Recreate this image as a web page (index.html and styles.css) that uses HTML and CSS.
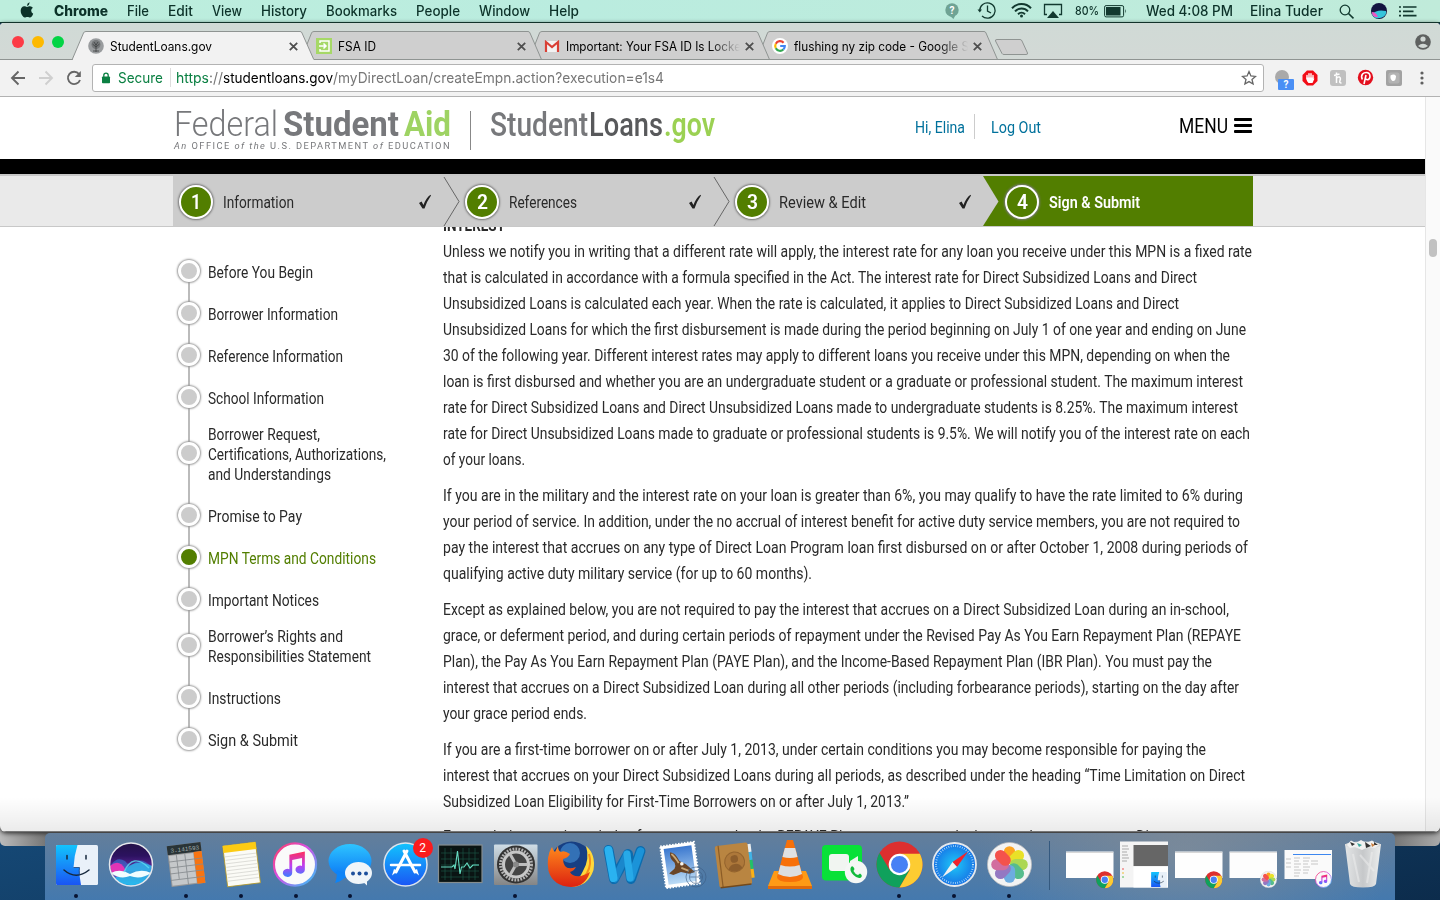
FILE: index.html
```html
<!DOCTYPE html>
<html lang="en">
<head>
<meta charset="utf-8">
<title>StudentLoans.gov</title>
<link rel="stylesheet" href="styles.css">
</head>
<body>
<svg width="0" height="0" class="defs">
  <defs>
    <linearGradient id="gSilver" x2="0" y2="1"><stop stop-color="#cfdde6"/><stop offset="1" stop-color="#858585"/></linearGradient>
    <linearGradient id="gBlue" x2="0" y2="1"><stop stop-color="#12c4fd"/><stop offset="1" stop-color="#1a55f4"/></linearGradient>
    <linearGradient id="gMsg" x2="0" y2="1"><stop stop-color="#2ec4ff"/><stop offset="1" stop-color="#0a76f5"/></linearGradient>
    <linearGradient id="gSky" x2="0" y2="1"><stop stop-color="#3b78cf"/><stop offset="1" stop-color="#bcdcf6"/></linearGradient>
    <linearGradient id="gMusic" x2="0" y2="1"><stop stop-color="#ff2f5a"/><stop offset=".55" stop-color="#c03df0"/><stop offset="1" stop-color="#3c7dff"/></linearGradient>
    <linearGradient id="gRing" x2="1" y2="1"><stop stop-color="#ff3b5c"/><stop offset=".45" stop-color="#d451e8"/><stop offset="1" stop-color="#28c9f7"/></linearGradient>
    <linearGradient id="gSiri" x2="0" y2="1"><stop stop-color="#241247"/><stop offset=".3" stop-color="#2c1260"/><stop offset=".55" stop-color="#5a2594"/><stop offset="1" stop-color="#1fa4e6"/></linearGradient>
    <linearGradient id="gTrash" x2="1" y2="0"><stop stop-color="#e3e5e6"/><stop offset=".5" stop-color="#c6c8ca"/><stop offset="1" stop-color="#eceeee"/></linearGradient>
    <linearGradient id="gFox" x2="0" y2="1"><stop stop-color="#ff8a1c"/><stop offset="1" stop-color="#dc2110"/></linearGradient>
    <radialGradient id="gSafari"><stop stop-color="#1fc8f7"/><stop offset="1" stop-color="#1672e6"/></radialGradient>
    <symbol id="chrome" viewBox="0 0 48 48">
      <circle cx="24" cy="24" r="23.5" fill="#dd2f2f"/>
      <path d="M3.6 12.3A23.5 23.5 0 0 0 24 47.5L34 30 24 24 14 29.5Z" fill="#0fa15c"/>
      <path d="M44.8 13H24L34.5 29.5 24 47.5A23.5 23.5 0 0 0 44.8 13Z" fill="#fdcc32"/>
      <circle cx="24" cy="24" r="11" fill="#fff"/><circle cx="24" cy="24" r="8.7" fill="#4880f5"/>
    </symbol>
    <symbol id="photos" viewBox="0 0 48 48">
      <circle cx="24" cy="24" r="23.5" fill="#f3f3f3" stroke="#bbb" stroke-width=".8"/>
      <g opacity=".9">
        <rect x="18" y="4.5" width="12" height="19" rx="6" fill="#ff9c0a"/>
        <rect x="18" y="4.5" width="12" height="19" rx="6" fill="#e9e013" transform="rotate(45 24 24)"/>
        <rect x="18" y="4.5" width="12" height="19" rx="6" fill="#a5d543" transform="rotate(90 24 24)"/>
        <rect x="18" y="4.5" width="12" height="19" rx="6" fill="#46b783" transform="rotate(135 24 24)"/>
        <rect x="18" y="4.5" width="12" height="19" rx="6" fill="#5fa5df" transform="rotate(180 24 24)"/>
        <rect x="18" y="4.5" width="12" height="19" rx="6" fill="#8a6bbd" transform="rotate(225 24 24)"/>
        <rect x="18" y="4.5" width="12" height="19" rx="6" fill="#cf5f96" transform="rotate(270 24 24)"/>
        <rect x="18" y="4.5" width="12" height="19" rx="6" fill="#f5413b" transform="rotate(315 24 24)"/>
      </g>
    </symbol>
    <symbol id="itunes" viewBox="0 0 48 48">
      <circle cx="24" cy="24" r="22.5" fill="#fafafa" stroke="url(#gRing)" stroke-width="2.4"/>
      <path d="M18 13.5 34.5 10V29.5a5 4.3 0 1 1-3-4V17L21 19.2V33a5 4.3 0 1 1-3-4Z" fill="url(#gMusic)"/>
    </symbol>
    <symbol id="finder" viewBox="0 0 42 40">
      <rect width="42" height="40" rx="1.5" fill="#e9f1f9"/>
      <path d="M1.5 0H21.500Q18 11 17.500 22.500H23.500Q23 31 25 40H1.500Q0 40 0 38.500V1.500Q0 0 1.500 0Z" fill="url(#gBlue)"/>
      <path d="M11 10.500V14M30 10.500V14M8 25Q20 35.500 33 25" fill="none" stroke="#16283c" stroke-width="1.500" stroke-linecap="round"/>
      <path d="M17.500 22.500H23.500Q23 25 23.400 30" fill="none" stroke="#183f78" stroke-width=".8"/>
    </symbol>
  </defs>
</svg>

<div class="menubar">
  <svg class="apple" width="14" height="16" viewBox="0 0 14 16"><path d="M9.600.3Q9.700 3 7 4 6.800 1.300 9.600.3ZM7 4.900C8 4.700 8.800 4.200 10 4.200q1.900 0 2.900 1.500-1.800 1.100-1.700 3.100t2 3q-.8 2.200-2 3.300c-1.300.9-2.200-.2-3.800-.2s-2.600 1.200-3.900.1C1.500 13.200.6 10.800.7 8.500.8 6 2.300 4.300 4.300 4.300 5.400 4.300 6 4.900 7 4.900Z" fill="#0c3229"/></svg>
  <div class="menus">
    <b data-w="54">Chrome</b><span data-w="22">File</span><span data-w="25">Edit</span><span data-w="30">View</span><span data-w="46">History</span><span data-w="71">Bookmarks</span><span data-w="44">People</span><span data-w="51">Window</span><span data-w="30">Help</span>
  </div>
  <svg class="status" width="125" height="22" viewBox="945 0 125 22" fill="none" stroke="#12392f" stroke-width="1.300">
    <circle cx="952" cy="10" r="6.700" fill="#6fa394" stroke="none"/><path d="M950 16H955L953.500 19Z" fill="#6fa394" stroke="none"/>
    <text x="952" y="13.500" text-anchor="middle" class="q" stroke="none">?</text>
    <path d="M979.700 10.500A7.700 7.700 0 1 1 982 16"/><path d="M977.500 9.500H982L979.800 12.500Z" fill="#12392f" stroke="none"/><path d="M987.500 5.500V11L991 13"/>
    <g stroke-width="2"><path d="M1012 8.200A13 13 0 0 1 1031 8.200M1015 11.400A9 9 0 0 1 1028 11.400M1018 14.200A5 5 0 0 1 1025 14.200"/></g><circle cx="1021.500" cy="16" r="1.500" fill="#12392f" stroke="none"/>
    <path d="M1047 14.500H1044.500V4.500H1061.500V14.500H1059"/><path d="M1053 11 1059 18H1047Z" fill="#12392f" stroke="none"/>
  </svg>
  <span class="pct" data-w="24">80%</span>
  <svg class="battery" width="24" height="13" viewBox="0 0 24 13"><rect x=".6" y=".6" width="19" height="11.300" rx="1.500" fill="none" stroke="#12392f"/><rect x="2" y="2" width="14.500" height="8.500" fill="#12392f"/><path d="M21.300 4V8.500Q23 6.200 21.300 4Z" fill="#12392f"/></svg>
  <span class="clock" data-w="87">Wed 4:08 PM</span>
  <span class="user" data-w="73">Elina Tuder</span>
  <svg class="right-icons" width="90" height="22" viewBox="1335 0 90 22">
    <g fill="none" stroke="#12392f"><circle cx="1345" cy="10" r="4.800" stroke-width="1.300"/><path d="M1348.500 13.500 1353.500 18.300" stroke-width="1.600"/></g>
    <circle cx="1379" cy="11" r="8" fill="#131440"/><path d="M1372 14Q1377 9 1386 11 1387 15 1382 17.500 1374 20 1372 14Z" fill="#36c5db"/><path d="M1372 12Q1376 12 1378 17H1375Q1372 16 1372 12Z" fill="#ee55c3"/>
    <path d="M1403 7H1416.500M1403 11.300H1413.500M1403 15.600H1416.500" stroke="#12392f" stroke-width="1.700"/><path d="M1399 7H1401M1399 11.300H1401M1399 15.600H1401" stroke="#12392f" stroke-width="1.700"/>
  </svg>
</div>

<div class="desktop">
  <div class="rear-window"></div>
  <div class="window">
    <div class="tabstrip">
      <svg class="tabshapes" width="1440" height="37" viewBox="0 23 1440 37" stroke="#8f9492">
        <g fill="#cfcfcf">
          <path d="M757 59.500 767.500 33Q768 31.500 770 31.500H984Q985.500 31.500 986 33L997.500 59.500Z"/>
          <path d="M529 59.500 539.500 33Q540 31.500 542 31.500H756Q757.500 31.500 758 33L769.500 59.500Z"/>
          <path d="M301 59.500 311.500 33Q312 31.500 314 31.500H528Q529.500 31.500 530 33L541.500 59.500Z"/>
          <path d="M997 39.500H1020Q1021.500 39.500 1022 41L1027.500 53Q1028 54.500 1026 54.500H1004Q1002.500 54.500 1002 53.500L995.500 41Q995 39.500 997 39.500Z"/>
        </g>
        <path d="M0 59.500H1440"/>
        <path d="M72 60 83.500 33Q84 31.500 86 31.500H300Q301.500 31.500 302 33L314 60Z" fill="#f2f2f2"/>
        <path d="M73 60.500H313.500V59H73Z" fill="#f2f2f2" stroke="none"/>
        <g stroke="none"><circle cx="18" cy="42" r="6" fill="#fc3b46"/><circle cx="38" cy="42" r="6" fill="#fdb900"/><circle cx="58" cy="42" r="6" fill="#03d445"/></g>
        <g stroke="none"><circle cx="1423" cy="42" r="7.800" fill="#5e6160"/><circle cx="1423" cy="39" r="2.600" fill="#d1d8d5"/><path d="M1418 46Q1423 41.500 1428 46 1423 50 1418 46Z" fill="#d1d8d5"/></g>
      </svg>
      <div class="tabs">
        <div class="tab">
          <svg width="16" height="16"><circle cx="8" cy="8" r="7.800" fill="#999c9e"/><circle cx="8" cy="6.500" r="4.500" fill="#75787a"/><path d="M8 14V6M8 9 4.500 6M8 9 11.500 6M8 7 6 4M8 7 10 4M5 13H11" stroke="#3c3f40" stroke-width=".8"/></svg>
          <span class="ttl"><span data-w="102">StudentLoans.gov</span></span>
          <svg class="x" width="9" height="9"><path d="M.8.8 8.200 8.200M8.200.8.8 8.200"/></svg>
        </div>
        <div class="tab">
          <svg width="16" height="16"><rect width="16" height="16" fill="#a6d867"/><path d="M4 5V3H13V13H4V11M3 8H9.500M7.500 5.500 10 8 7.500 10.500" fill="none" stroke="#fff" stroke-width="1.500"/></svg>
          <span class="ttl"><span data-w="38">FSA ID</span></span>
          <svg class="x" width="9" height="9"><path d="M.8.8 8.200 8.200M8.200.8.8 8.200"/></svg>
        </div>
        <div class="tab">
          <svg width="16" height="16"><path d="M2 3H14V14H2Z" fill="#f2f2f2"/><path d="M2 14V4L8 9 14 4V14" fill="none" stroke="#d93f35" stroke-width="2.200"/></svg>
          <span class="ttl fade"><span data-w="175">Important: Your FSA ID Is Locke</span></span>
          <svg class="x" width="9" height="9"><path d="M.8.8 8.200 8.200M8.200.8.8 8.200"/></svg>
        </div>
        <div class="tab">
          <svg width="16" height="16" fill="none" stroke-width="2.200"><circle cx="8" cy="8" r="8" fill="#fff"/><path d="M11.600 4.700A4.800 4.800 0 0 0 3.800 5.700" stroke="#ea4335"/><path d="M3.800 5.700A4.800 4.800 0 0 0 3.800 10.300" stroke="#fbbc05"/><path d="M3.800 10.300A4.800 4.800 0 0 0 11.300 11.500" stroke="#34a853"/><path d="M11.300 11.500A4.800 4.800 0 0 0 12.800 8H8.200" stroke="#4285f4"/></svg>
          <span class="ttl fade"><span data-w="175">flushing ny zip code - Google S</span></span>
          <svg class="x" width="9" height="9"><path d="M.8.8 8.200 8.200M8.200.8.8 8.200"/></svg>
        </div>
      </div>
    </div>

    <div class="toolbar">
      <svg class="nav" width="92" height="36" viewBox="0 60 92 36" fill="none" stroke="#666" stroke-width="1.900">
        <path d="M25 78H12.500M18.500 71.500 12 78 18.500 84.500"/><path d="M39 78H51.500M45.500 71.500 52 78 45.500 84.500" stroke="#cfcfcf"/>
        <path d="M79 74A6.200 6.200 0 1 0 80 80"/><path d="M80.800 71V77H74.800Z" fill="#666" stroke="none"/>
      </svg>
      <div class="omnibox">
        <svg class="lock" width="10" height="12"><rect x="1" y="4.500" width="8" height="6.800" rx=".8" fill="#0b8043"/><path d="M2.800 5V3.300A2.200 2.200 0 0 1 7.200 3.300V5" fill="none" stroke="#0b8043" stroke-width="1.300"/></svg>
        <span class="secure" data-w="45">Secure</span>
        <i class="vr"></i>
        <span class="url"><span class="g" data-w="33">https</span><span data-w="14">://</span><span class="k" data-w="110">studentloans.gov</span><span data-w="331">/myDirectLoan/createEmpn.action?execution=e1s4</span></span>
        <svg class="star" width="16" height="16" viewBox="0 0 16 16"><path d="M8 1.600 9.900 6 14.500 6.400 11 9.500 12.100 14 8 11.600 3.900 14 5 9.500 1.500 6.400 6.100 6Z" fill="none" stroke="#666" stroke-width="1.300"/></svg>
      </div>
      <svg class="exts" width="172" height="36" viewBox="1268 60 172 36">
        <circle cx="1282" cy="77" r="7" fill="#a9a9a9"/><rect x="1278" y="79" width="16" height="11" rx="1" fill="#4a8ff5"/><text x="1286" y="88" text-anchor="middle" class="q">?</text>
        <path d="M1307 70.500H1313L1317.500 75V81L1313 85.500H1307L1302.500 81V75Z" fill="#f20d17"/><path d="M1307 79V75.500M1309 78V73.800M1311 78V73.800M1313 78V75.500" stroke="#fff" stroke-width="1.400" stroke-linecap="round"/><path d="M1306.300 77.500H1313.700V79L1314.500 78.500 1312.500 83H1308.500Q1306.500 81.500 1306.300 77.500Z" fill="#fff"/>
        <rect x="1330" y="70" width="16" height="16" rx="3" fill="#c0c0c0"/><path d="M1336.500 72.500V83M1336.500 79Q1337 76.500 1339.500 77 1341 78 1340 80.500T1341.500 83M1334 75.500 1339.500 74" fill="none" stroke="#fff" stroke-width="1.500"/>
        <circle cx="1365.500" cy="77.500" r="7.700" fill="#e3101e"/><path d="M1362.300 79.500C1360 74 1364 72.500 1366.300 72.500 1371 72.500 1371 79.500 1367.500 79.700 1366.500 79.700 1365.800 79.200 1365.500 78.500M1366 75 1364 84" fill="none" stroke="#fff" stroke-width="1.600"/>
        <rect x="1386" y="70" width="16" height="16" rx="2" fill="#a2a2a2"/><rect x="1388.500" y="72.500" width="11" height="11" rx="2" fill="#b3b3b3"/><path d="M1390.500 75.500Q1394 73.500 1396 76 1396 81.500 1392.500 81 1390 79 1390.500 75.500Z" fill="#fff"/>
        <g fill="#5f5f5f"><circle cx="1422" cy="73" r="1.600"/><circle cx="1422" cy="78" r="1.600"/><circle cx="1422" cy="83" r="1.600"/></g>
      </svg>
    </div>

    <div class="viewport">
      <div class="page">
        <header class="site-head">
          <div class="brand">
            <div class="fsa"><span class="thin" data-w="104">Federal</span><span class="bold stu" data-w="116">Student</span><span class="bold lime aid" data-w="47">Aid</span></div>
            <div class="office" data-w="277"><i>An</i> OFFICE <i>of the</i> U.S. DEPARTMENT <i>of</i> EDUCATION</div>
          </div>
          <div class="brand2"><span data-w="98">Student</span><span class="dark" data-w="74">Loans</span><span class="lime2" data-w="51">.gov</span></div>
          <a class="hi"><span data-w="50">Hi, Elina</span></a>
          <a class="logout"><span data-w="50">Log Out</span></a>
          <span class="menu"><span data-w="49">MENU</span></span>
          <div class="burger"><i></i><i></i><i></i></div>
        </header>
        <div class="black"></div>
        <nav class="stepbar">
          <div class="steps">
            <div class="step first"><b class="num"><span data-w="10">1</span></b><span class="lbl"><span data-w="71">Information</span></span><svg class="chk" width="14" height="16"><path d="M1 9 3.500 7.500 5.500 11Q8 4 12.500.8L13 1.500Q9 7 6.500 14.500H4.500Z" fill="#222"/></svg></div>
            <div class="step"><svg class="chev" width="17" height="50"><path d="M1 1 16 25.500 1 50" fill="none" stroke="#666"/></svg><b class="num"><span data-w="11">2</span></b><span class="lbl"><span data-w="68">References</span></span><svg class="chk" width="14" height="16"><path d="M1 9 3.500 7.500 5.500 11Q8 4 12.500.8L13 1.500Q9 7 6.500 14.500H4.500Z" fill="#222"/></svg></div>
            <div class="step"><svg class="chev" width="17" height="50"><path d="M1 1 16 25.500 1 50" fill="none" stroke="#666"/></svg><b class="num"><span data-w="11">3</span></b><span class="lbl"><span data-w="87">Review &amp; Edit</span></span><svg class="chk" width="14" height="16"><path d="M1 9 3.500 7.500 5.500 11Q8 4 12.500.8L13 1.500Q9 7 6.500 14.500H4.500Z" fill="#222"/></svg></div>
            <div class="step now"><svg class="chev" width="17" height="50"><path d="M0 0 15.500 25.500 0 50Z" fill="#ccc"/></svg><b class="num"><span data-w="11">4</span></b><span class="lbl"><span data-w="91">Sign &amp; Submit</span></span></div>
          </div>
        </nav>
        <div class="columns">
          <ul class="side">
            <li><i></i><div><p data-w="105">Before You Begin</p></div></li>
            <li><i></i><div><p data-w="130">Borrower Information</p></div></li>
            <li><i></i><div><p data-w="135">Reference Information</p></div></li>
            <li><i></i><div><p data-w="116">School Information</p></div></li>
            <li class="multi"><i></i><div><p data-w="112">Borrower Request,</p><p data-w="178">Certifications, Authorizations,</p><p data-w="123">and Understandings</p></div></li>
            <li><i></i><div><p data-w="94">Promise to Pay</p></div></li>
            <li class="on"><i></i><div><p data-w="168">MPN Terms and Conditions</p></div></li>
            <li><i></i><div><p data-w="111">Important Notices</p></div></li>
            <li class="multi"><i></i><div><p data-w="135">Borrower’s Rights and</p><p data-w="163">Responsibilities Statement</p></div></li>
            <li><i></i><div><p data-w="73">Instructions</p></div></li>
            <li><i></i><div><p data-w="90">Sign &amp; Submit</p></div></li>
          </ul>
          <main class="terms">
            <h3 data-w="62">INTEREST</h3>
            <section>
              <p data-w="809">Unless we notify you in writing that a different rate will apply, the interest rate for any loan you receive under this MPN is a fixed rate</p>
              <p data-w="754">that is calculated in accordance with a formula specified in the Act. The interest rate for Direct Subsidized Loans and Direct</p>
              <p data-w="736">Unsubsidized Loans is calculated each year. When the rate is calculated, it applies to Direct Subsidized Loans and Direct</p>
              <p data-w="803">Unsubsidized Loans for which the first disbursement is made during the period beginning on July 1 of one year and ending on June</p>
              <p data-w="787">30 of the following year. Different interest rates may apply to different loans you receive under this MPN, depending on when the</p>
              <p data-w="800">loan is first disbursed and whether you are an undergraduate student or a graduate or professional student. The maximum interest</p>
              <p data-w="795">rate for Direct Subsidized Loans and Direct Unsubsidized Loans made to undergraduate students is 8.25%. The maximum interest</p>
              <p data-w="807">rate for Direct Unsubsidized Loans made to graduate or professional students is 9.5%. We will notify you of the interest rate on each</p>
              <p data-w="82">of your loans.</p>
            </section>
            <section>
              <p data-w="800">If you are in the military and the interest rate on your loan is greater than 6%, you may qualify to have the rate limited to 6% during</p>
              <p data-w="797">your period of service. In addition, under the no accrual of interest benefit for active duty service members, you are not required to</p>
              <p data-w="805">pay the interest that accrues on any type of Direct Loan Program loan first disbursed on or after October 1, 2008 during periods of</p>
              <p data-w="369">qualifying active duty military service (for up to 60 months).</p>
            </section>
            <section>
              <p data-w="786">Except as explained below, you are not required to pay the interest that accrues on a Direct Subsidized Loan during an in-school,</p>
              <p data-w="798">grace, or deferment period, and during certain periods of repayment under the Revised Pay As You Earn Repayment Plan (REPAYE</p>
              <p data-w="769">Plan), the Pay As You Earn Repayment Plan (PAYE Plan), and the Income-Based Repayment Plan (IBR Plan). You must pay the</p>
              <p data-w="796">interest that accrues on a Direct Subsidized Loan during all other periods (including forbearance periods), starting on the day after</p>
              <p data-w="144">your grace period ends.</p>
            </section>
            <section>
              <p data-w="763">If you are a first-time borrower on or after July 1, 2013, under certain conditions you may become responsible for paying the</p>
              <p data-w="802">interest that accrues on your Direct Subsidized Loans during all periods, as described under the heading “Time Limitation on Direct</p>
              <p data-w="466">Subsidized Loan Eligibility for First-Time Borrowers on or after July 1, 2013.”</p>
            </section>
            <section class="last">
              <p data-w="730">Except during certain periods of repayment under the REPAYE Plan, you must pay the interest that accrues on a Direct</p>
            </section>
          </main>
        </div>
      </div>
      <div class="scroll"><i></i></div>
    </div>
  </div>

  <div class="dock">
    <div class="cell run"><svg viewBox="0 0 55 66"><use href="#finder" x="7" y="11" width="42" height="40"/></svg></div>
    <div class="cell"><svg viewBox="0 0 55 66"><circle cx="28" cy="30.500" r="21.500" fill="url(#gSiri)"/><path d="M8 31Q14 22 22 27 28 34 30 30 38 22 48 32L47 37 9 37Z" fill="#3a7fe0" opacity=".55"/><path d="M7 32Q16 24 22 35 26 44 14 43 8 40 7 32Z" fill="#ff2fb4" opacity=".85"/><path d="M22 36Q32 24 49 32 49 40 42 47 34 51 28 51 16 50 12 44Z" fill="#2cc6f2" opacity=".7"/><path d="M8 39Q17 34 27 40 38 34 48 39 38 46 27 42 17 46 8 39Z" fill="#f0fdff"/><path d="M21 38Q30 18 46 34" fill="none" stroke="#5be0f2" stroke-width="1.300" opacity=".8"/><circle cx="28" cy="30.500" r="21.500" fill="none" stroke="#e6e8ec" stroke-width="1.500"/></svg></div>
    <div class="cell run"><svg viewBox="0 0 55 66"><g transform="rotate(-7 28 30)"><rect x="11" y="10" width="34" height="41" fill="#999"/><rect x="11" y="10" width="34" height="9" fill="#293437"/><rect x="37" y="19" width="8" height="32" fill="#f77412"/><rect x="12" y="20" width="24.500" height="30" fill="#c5c8ca"/><path d="M11 26H45M11 32H45M11 38H45M11 44.500H45M19.500 19V44M28 19V51" stroke="#858a8e" stroke-width=".8"/><text x="43" y="17" text-anchor="end" class="lcd">3.141593</text></g></svg></div>
    <div class="cell run"><svg viewBox="0 0 55 66"><g transform="rotate(-7 28 30)"><rect x="12" y="10" width="33" height="41" fill="#fbfbf6" stroke="#b89a22" stroke-width=".8"/><rect x="12" y="10" width="33" height="7" fill="#fccb13"/><path d="M13 21H44M13 24.500H44M13 28H44M13 31.500H44M13 35H44M13 38.500H44M13 42H44M13 45.500H44" stroke="#d2d2cc" stroke-width=".7"/></g></svg></div>
    <div class="cell run"><svg viewBox="0 0 55 66"><use href="#itunes" x="4.500" y="8" width="45" height="45"/></svg></div>
    <div class="cell run"><svg viewBox="0 0 55 66"><ellipse cx="27" cy="27" rx="21.500" ry="17" fill="url(#gMsg)"/><path d="M14 36Q14 45 12 49 20 47 24 41Z" fill="#0d84f8"/><ellipse cx="35.500" cy="39" rx="13.500" ry="11" fill="#f0f5f9"/><path d="M38 46 44 51.500 44 44Z" fill="#f0f5f9"/><g fill="#1d4f9c"><circle cx="30" cy="39.500" r="2"/><circle cx="36.500" cy="39.500" r="2"/><circle cx="43" cy="39.500" r="2"/></g></svg></div>
    <div class="cell"><svg viewBox="0 0 55 66"><circle cx="27.500" cy="30.500" r="21.500" fill="url(#gBlue)" stroke="#dce4ed" stroke-width="1.500"/><g stroke="#fff" stroke-width="3" stroke-linecap="round"><path d="M26 17 37 38M29 17 18 38"/><path d="M13 31H42" stroke-width="2.500"/></g><path d="M35.500 37 39 35 41 41.500Z M19.500 37 16 35 14 41.500Z" fill="#fff"/><circle cx="45" cy="14" r="10" fill="#fb1b1e"/><text x="44.500" y="18" text-anchor="middle" class="badge">2</text></svg></div>
    <div class="cell"><svg viewBox="0 0 55 66"><rect x="5.500" y="11" width="43.500" height="37.500" fill="#0a1413" stroke="#858d8f" stroke-width="1.200"/><path d="M8 19H46M8 25H46M8 31H46M8 37H46M8 43H46M12 14V46M18 14V46M30 14V46M36 14V46M42 14V46" stroke="#1c5b4b" stroke-width=".6"/><path d="M8 33H19L21 31 22 35 24.500 17 27 40 28.500 33H31L34 29 37 34 40 31H46" fill="none" stroke="#66dcc1" stroke-width="1.100"/></svg></div>
    <div class="cell run"><svg viewBox="0 0 55 66"><rect x="6" y="10.500" width="43.500" height="40.500" rx="1" fill="url(#gSilver)"/><circle cx="28" cy="30.500" r="19" fill="#333"/><circle cx="28" cy="30.500" r="15.500" fill="none" stroke="#b3b3b3" stroke-width="3" stroke-dasharray="1.800 1.200"/><circle cx="28" cy="30.500" r="12.500" fill="#444" stroke="#c7c7c7" stroke-width="3"/><path d="M28 30.500H40M28 30.500 22 20M28 30.500 22 41" stroke="#bdbdbd" stroke-width="3"/><circle cx="28" cy="30.500" r="3" fill="#888"/></svg></div>
    <div class="cell"><svg viewBox="0 0 55 66"><circle cx="28.500" cy="29" r="21.500" fill="#173f83"/><circle cx="27" cy="19" r="10" fill="#4a9be0" opacity=".55"/><path d="M43 12Q53 20 50.500 36 45 53 27 53 36 46 40 37 47 25 43 12Z" fill="#ffd83a"/><path d="M46 20Q49 30 44 39 39 47 33 51" stroke="#f4901d" stroke-width="2" fill="none"/><path d="M9 13Q10 17 12 18L15 12Q15 17 18 18 21 16 27 20 25 24 20 25 20 29 22 32 25 36 33 33 31 37 27 38 29 43 38 42 44 40 47 38 42 53 28 53 10 52 5.500 37 3 22 9 13Z" fill="url(#gFox)"/></svg></div>
    <div class="cell"><svg viewBox="0 0 55 66"><path d="M11.500 16 17 45 31 20 34 45 43.500 17" fill="none" stroke="#0b6cae" stroke-width="10" stroke-linejoin="round" stroke-linecap="round"/><path d="M18 45 30 20" stroke="#1a87cc" stroke-width="7" stroke-linecap="round"/><path d="M11.500 16 16.500 44" stroke="#2ab2f0" stroke-width="8" stroke-linecap="round"/><path d="M34 44 43.500 17" stroke="#1b93d8" stroke-width="7.500" stroke-linecap="round"/><path d="M30 20 33 44" stroke="#27a9e8" stroke-width="7" stroke-linecap="round"/></svg></div>
    <div class="cell"><svg viewBox="0 0 55 66"><g transform="rotate(-8 28 31)"><rect x="11" y="10" width="34" height="42" fill="#fff" stroke="#fff" stroke-width="2" stroke-dasharray="1.500 1.500"/><rect x="14" y="13" width="28" height="36" fill="url(#gSky)"/><path d="M20 17Q25 18 28 27L34 31 40 38 42 40 36 41 28 38 20 40 16 38 22 34Q24 31 23 28 18 23 20 17Z" fill="#6a4526"/><path d="M21 19Q24 22 27 29M29 34 36 38" fill="none" stroke="#c9a877" stroke-width="1.800"/><circle cx="30" cy="30" r="1.800" fill="#f7f4ec"/></g><g fill="none" stroke="#3e5f86" opacity=".65"><circle cx="44" cy="43" r="10"/><circle cx="44" cy="43" r="6.500"/><path d="M38 43H50M44 37V49"/></g></svg></div>
    <div class="cell"><svg viewBox="0 0 55 66"><g transform="rotate(-7 27 31)"><path d="M42 12H46V20H42Z" fill="#e9eef0"/><path d="M42 20H46V28H42Z" fill="#41b4e6"/><path d="M42 28H46V37H42Z" fill="#22c168"/><path d="M42 37H46V46H42Z" fill="#fbb117"/><rect x="10" y="10" width="33" height="42" rx="2" fill="#b98541"/><path d="M13.500 10V52" stroke="#8b5c26" stroke-width="1.200"/><path d="M11 52H42" stroke="#72491c" stroke-width="1.500"/><circle cx="28" cy="28" r="10" fill="#ad783a" stroke="#94642e"/><circle cx="28" cy="25" r="3.800" fill="#8d5e2c"/><path d="M21 35Q23 30 28 30T35 35Q28 40 21 35Z" fill="#8d5e2c"/></g></svg></div>
    <div class="cell"><svg viewBox="0 0 55 66"><path d="M12 37H44L50 52V55H6V52Z" fill="#ff9a15"/><path d="M6 52H50V55H6Z" fill="#e06b0b"/><path d="M25 6H31L41 43Q41 48 28 48T15 43Z" fill="#f77009"/><path d="M22.800 14H33.200L35.500 23Q28 25 20.500 23Z" fill="#dfe1e3"/><path d="M18.500 31Q28 34 37.500 31L40 40Q28 46 16 40Z" fill="#dcdee0"/></svg></div>
    <div class="cell"><svg viewBox="0 0 55 66"><rect x="5" y="11" width="40" height="35.500" rx="4" fill="#08e138"/><rect x="12" y="20" width="20" height="17" rx="3" fill="#f1f5f1"/><path d="M33 27 41 22V34L33 30Z" fill="#f1f5f1"/><circle cx="39" cy="38" r="11.200" fill="#f5f7f5"/><path d="M34 33Q36 31 37.500 35L36.500 37Q38 40 41 41L43 39.500Q46 41.500 44 43.500 41 45.500 36.500 41T34 33Z" fill="#13ba3c"/></svg></div>
    <div class="cell run"><svg viewBox="0 0 55 66"><use href="#chrome" x="4" y="7" width="47" height="47"/></svg></div>
    <div class="cell run"><svg viewBox="0 0 55 66"><circle cx="27.500" cy="30.500" r="21.500" fill="url(#gSafari)" stroke="#e5e9ed" stroke-width="1.800"/><circle cx="27.500" cy="30.500" r="18.500" fill="none" stroke="#bfe6fb" stroke-width="2" stroke-dasharray=".7 1.600"/><path d="M41 17.500 30 33 25.500 28Z" fill="#f3232c"/><path d="M15 43.500 25.500 28 30 33Z" fill="#f1f1f1"/></svg></div>
    <div class="cell run"><svg viewBox="0 0 55 66"><use href="#photos" x="5" y="8" width="45" height="45"/></svg></div>
    <div class="sep"></div>
    <div class="cell"><svg viewBox="0 0 55 66"><rect x="4" y="17.500" width="47.500" height="26.500" fill="#fefefe"/><path d="M4 18.500H51" stroke="#d7d7d7"/><use href="#chrome" x="34" y="37" width="17.500" height="17.500"/></svg></div>
    <div class="cell"><svg viewBox="0 0 55 66"><rect x="4" y="7.500" width="48" height="46" fill="#f4f4f4"/><rect x="17.500" y="11" width="34.500" height="21" fill="#666"/><path d="M6 12H12M6 15H13M6 18H11M6 21H12M6 24H13M6 27H11" stroke="#aaa"/><path d="M6 35H8" stroke="#e55"/><path d="M6 39H8" stroke="#eb3"/><path d="M6 43H8" stroke="#5b5"/><rect x="17.500" y="33" width="34.500" height="20.500" fill="#fff"/><use href="#finder" x="35" y="38" width="16" height="15"/></svg></div>
    <div class="cell"><svg viewBox="0 0 55 66"><rect x="4" y="17.500" width="47.500" height="26.500" fill="#fefefe"/><path d="M4 18.500H51" stroke="#d7d7d7"/><use href="#chrome" x="34" y="37" width="17.500" height="17.500"/></svg></div>
    <div class="cell"><svg viewBox="0 0 55 66"><rect x="3.500" y="17.500" width="47.500" height="26.500" fill="#fdfdfd"/><path d="M4 18.500H51" stroke="#dedede"/><use href="#photos" x="34" y="37" width="17" height="17"/></svg></div>
    <div class="cell"><svg viewBox="0 0 55 66"><rect x="3.500" y="16" width="47.500" height="29" fill="#fafafa"/><path d="M12 20.500H50" stroke="#3c87f0"/><path d="M5 25H10M5 29H10M5 33H10M13 24H19M13 27H18M13 30H20M13 33H18M13 36H20M13 39H19M13 42H18M22 24H29M22 27H28M22 30H27M22 33H29M22 36H28M22 39H27M30 27H37M30 30H37" stroke="#b9b9b9" stroke-width=".8"/><use href="#itunes" x="34" y="37" width="17" height="17"/></svg></div>
    <div class="cell"><svg viewBox="0 0 55 66"><path d="M9 10 14 50Q15 53.500 27 53.500T40 50L45 10Z" fill="url(#gTrash)"/><ellipse cx="27" cy="11" rx="18" ry="3.500" fill="#d8dadb"/><path d="M11 11 15 6.500 20 9 25 6 30 9 36 6.500 43 11 39 14 32 13 26 16 19 13 14 14Z" fill="#f1f1f1"/><path d="M14 8 19 10 16 12ZM29 8 35 12 30 14ZM38 8 42 11 38 11Z" fill="#333"/><path d="M21 9 26 11 23 13Z" fill="#39a69b"/><path d="M35 9 39 11 36 13Z" fill="#c77c3b"/><path d="M17 20 23 48M36 18 31 49M24 21 38 37" stroke="#f3f3f3" opacity=".45" stroke-width="2"/></svg></div>
  </div>
</div>
<script src="fit.js"></script>
</body>
</html>
```

FILE: styles.css
```css
* { box-sizing: border-box; }
body { margin: 0; width: 1440px; height: 900px; overflow: hidden; display: flex; flex-direction: column; font-family: Roboto, "Liberation Sans", sans-serif; color: #2a2a2a; }
p, ul, h3 { margin: 0; padding: 0; }
svg { display: block; flex: none; }
.defs { position: absolute; }
[data-w] { display: inline-block; white-space: nowrap; flex: none; }
.fit { display: inline-block; transform-origin: 0 50%; white-space: pre; }

.menubar { height: 23px; flex: none; background: linear-gradient(90deg, #bdeedd, #baecdf 40%, #c0ebda); border-bottom: 1px solid #0d3a2e; display: flex; align-items: center; padding-left: 20px; font: 500 14px/22px Inter, Roboto, sans-serif; color: #0c3229; }
.apple { margin-top: -2px; margin-right: 20px; }
.menus { display: flex; gap: 19px; width: 891px; }
.menus b { font-weight: 800; }
.pct { margin-left: 5px; font-size: 12px; }
.battery { margin-left: 5px; }
.clock { margin-left: 18px; }
.user { margin-left: 17px; }
.right-icons { margin-left: 12px; }
.q { font: 700 10px Roboto, sans-serif; fill: #fff; }

.desktop { position: relative; flex: 1; background: linear-gradient(170deg, #173d5f, #0b3257 40%, #164a78 70%, #0c2c4c); }
.rear-window { position: absolute; left: 0; right: 0; top: 780px; height: 43px; background: linear-gradient(90deg, #bbb, #777 45px, #777 1395px, #aaa); border-radius: 0 0 5px 5px; }
.window { position: relative; height: 809px; display: flex; flex-direction: column; background: #fff; border-radius: 4px 4px 6px 6px; overflow: hidden; box-shadow: 0 1px 5px #222; }

.tabstrip { height: 37px; flex: none; position: relative; background: linear-gradient(#d0dad6, #d3d9d6); }
.tabshapes { position: absolute; left: 0; top: 0; }
.tabs { position: relative; display: flex; padding-left: 88px; height: 37px; }
.tab { width: 228px; padding-top: 9px; display: flex; align-items: center; font: 12.5px Inter, Roboto, sans-serif; color: #000; }
.ttl { margin-left: 6px; width: 174px; overflow: hidden; }
.fade { -webkit-mask-image: linear-gradient(90deg, #000 144px, transparent 174px); mask-image: linear-gradient(90deg, #000 144px, transparent 174px); }
.x { margin-left: 4.5px; stroke: #4f4f4f; stroke-width: 1.8; }
.toolbar { height: 37px; flex: none; background: #f2f2f2; border-bottom: 1px solid #b2b2b2; display: flex; }
.omnibox { width: 1172px; height: 28px; margin-top: 4px; border: 1px solid #b3b3b3; border-radius: 3px; background: #fff; display: flex; align-items: center; padding: 0 0 1px 8px; font: 14.5px Inter, Roboto, sans-serif; color: #777; }
.secure { color: #0b8043; margin-left: 7px; }
.vr { width: 1px; height: 19px; background: #ddd; margin: 0 5px 0 7px; }
.url { display: flex; width: 1065px; }
.url .g { color: #0b8043; }
.url .k { color: #000; }
.exts { margin-left: 4px; }

.viewport { flex: 1; min-height: 0; display: flex; position: relative; }
.viewport::after { content: ""; position: absolute; left: 0; right: 0; bottom: 0; height: 34px; background: linear-gradient(rgba(0,0,0,0), rgba(0,0,0,.08)); border-bottom: 1px solid #777; }
.page { width: 1425px; overflow: hidden; }
.scroll { width: 15px; background: #fafafa; border-left: 1px solid #e6e6e6; padding: 142px 3px 0; }
.scroll i { display: block; width: 8px; height: 18px; border-radius: 4px; background: #c1c1c1; }
.site-head { height: 62px; padding-left: 174px; display: flex; }
.brand { width: 297px; height: 39px; margin-top: 14px; border-right: 1px solid #888; color: #77787b; }
.fsa { display: flex; font-size: 35px; line-height: 26px; height: 27px; }
.fsa .fit { position: relative; top: 1px; }
.thin { font-weight: 300; }
.bold { font-weight: 700; }
.stu { margin-left: 5px; }
.aid { margin-left: 5px; }
.fsa .lime { color: #9ed363; }
.office { display: block; height: 12px; margin-top: 2px; font-size: 9px; line-height: 12px; letter-spacing: 1.4px; }
.brand2 { display: flex; gap: 1px; margin-left: 19px; margin-top: 10px; width: 425px; font-size: 33px; line-height: 35px; font-weight: 500; color: #77787b; }
.brand2 .dark { color: #58595b; }
.brand2 .lime2 { color: #9bd153; font-weight: 600; }
.hi, .logout { font-size: 16.5px; line-height: 27px; color: #00719c; height: 25px; margin-top: 17px; }
.hi { width: 60px; border-right: 1px solid #ccc; }
.logout { margin-left: 16px; width: 188px; }
.menu { font-size: 21px; line-height: 26px; color: #000; margin-top: 16px; }
.burger { width: 18px; margin: 21px 0 0 6px; display: flex; flex-direction: column; gap: 3px; }
.burger i { height: 3px; background: #000; border-radius: 1px; }
.black { height: 15px; background: #000; }
.stepbar { height: 53px; border-top: 2px solid #c8c8c8; border-bottom: 1px solid #c8c8c8; background: #eaeaea; padding-left: 173px; }
.steps { width: 1080px; height: 50px; display: flex; background: #ccc; }
.step { width: 270px; display: flex; align-items: center; position: relative; font-size: 16.5px; }
.num { width: 34px; height: 34px; flex: none; margin: 2px 0 0 5px; border-radius: 50%; background: #527e00; border: 2px solid #fff; box-shadow: 0 0 2px 1px #777; color: #fff; font-size: 20px; line-height: 31px; display: flex; justify-content: center; font-weight: 600; }
.first .num { margin-left: 6px; }
.lbl { width: 179px; flex: none; margin: 2px 0 0 9.5px; }
.first .lbl { width: 195px; margin-left: 9.5px; }
.chk { margin-top: 2px; }
.now { background: #527e00; color: #fff; font-weight: 600; }
.columns { display: flex; padding-left: 177px; }
.side { list-style: none; width: 265.5px; padding-top: 36px; position: relative; }
.side::before { content: ""; position: absolute; left: 11px; top: 44px; height: 468px; width: 1.5px; background: #bbb; }
.side li { display: flex; align-items: center; margin-bottom: 22px; position: relative; font-size: 16.5px; line-height: 20px; }
.side li > i { width: 22px; height: 22px; border: 3px solid #fff; box-shadow: 0 0 2px 1px #999; border-radius: 50%; background: #ccc; flex: none; margin: -4px 8px 0 .5px; }
.side li:not(.multi) { height: 20px; }
.side li.multi { margin-top: -6px; }
.side p { display: block; height: 20px; }
.side .on { color: #527e00; }
.side .on i { background: #527e00; }
.terms { width: 812px; font-size: 16.5px; line-height: 26px; }
.terms h3 { display: block; font-size: 16px; line-height: 26px; height: 26px; margin: -14px 0 0; clip-path: inset(14px 0 0 0); }
.terms section { margin-bottom: 10px; }
.terms p { display: block; height: 26px; }
.terms .last { margin-top: -1px; }

.dock { position: absolute; left: 45px; top: 810px; width: 1350px; height: 67px; border-radius: 5px 5px 0 0; background: radial-gradient(ellipse 210px 120px at 1140px 20px, rgba(150,150,150,.5), transparent), linear-gradient(#637e9b, #4479ae); display: flex; padding: 1px 0 0 3.5px; }
.cell { width: 54.9px; flex: none; position: relative; }
.cell svg { width: 55px; height: 66px; }
.run::after { content: ""; position: absolute; left: 25.5px; bottom: 2px; width: 4px; height: 4px; border-radius: 50%; background: #081331; }
.sep { width: 1px; height: 49px; margin: 7px 12px 0; background: #34597f; }
.lcd { font: 6px "Liberation Mono", monospace; fill: #a5b3b0; }
.badge { font: 12px Roboto, sans-serif; fill: #fff; }
```

FILE: fit.js
```js
document.querySelectorAll('[data-w]').forEach(function (el) {
  var inner = document.createElement('span');
  inner.className = 'fit';
  while (el.firstChild) inner.appendChild(el.firstChild);
  el.appendChild(inner);
  var w = parseFloat(el.dataset.w);
  var natural = inner.getBoundingClientRect().width;
  el.style.width = w + 'px';
  inner.style.transform = 'scaleX(' + (w / natural) + ')';
});
```
